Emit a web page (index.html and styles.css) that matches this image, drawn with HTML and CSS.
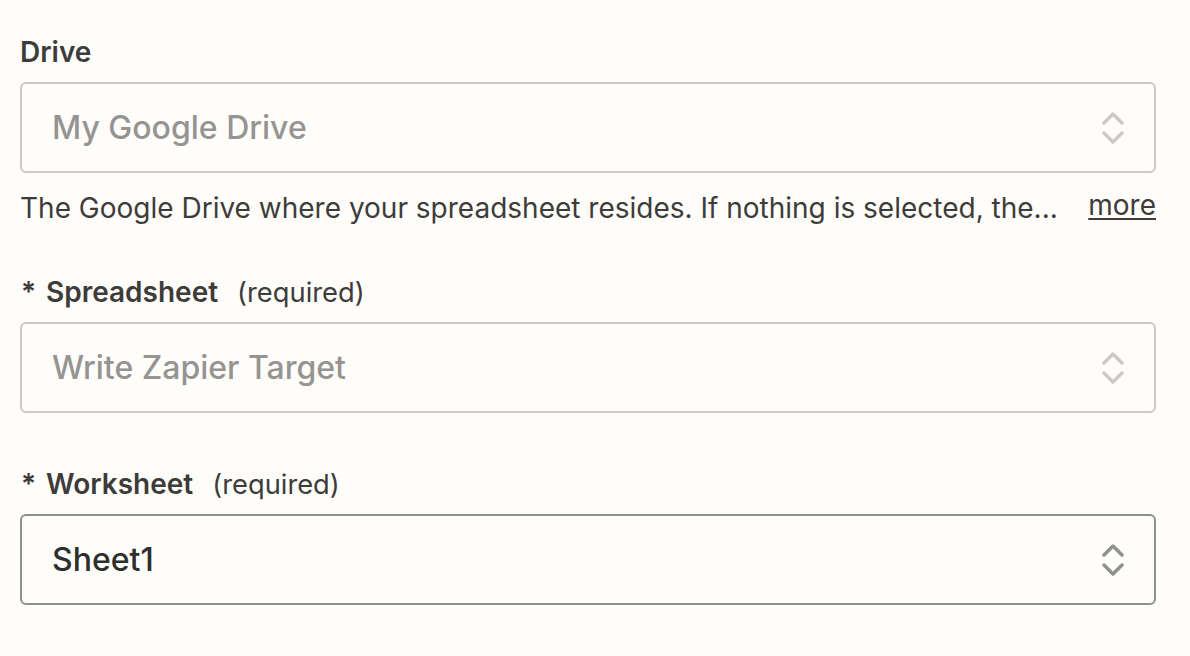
FILE: index.html
```html
<!DOCTYPE html>
<html>
<head>
<meta charset="utf-8">
<link rel="stylesheet" href="styles.css">
</head>
<body>
<div class="form">
  <div class="field field-drive">
    <div class="label"><span class="name">Drive</span></div>
    <div class="select is-empty">
      <span class="value">My Google Drive</span>
      <svg class="chev" viewBox="0 0 22 34" width="22" height="34"><polyline points="2,12 11,3 20,12"/><polyline points="2,22 11,31 20,22"/></svg>
    </div>
    <div class="help">
      <span class="help-text">The Google Drive where your spreadsheet resides. If nothing is selected, the...</span>
      <a class="more" href="#">more</a>
    </div>
  </div>
  <div class="field field-sheet">
    <div class="label"><span class="star">*</span><span class="name">Spreadsheet</span><span class="req">(required)</span></div>
    <div class="select is-empty">
      <span class="value">Write Zapier Target</span>
      <svg class="chev" viewBox="0 0 22 34" width="22" height="34"><polyline points="2,12 11,3 20,12"/><polyline points="2,22 11,31 20,22"/></svg>
    </div>
  </div>
  <div class="field field-work">
    <div class="label"><span class="star">*</span><span class="name">Worksheet</span><span class="req">(required)</span></div>
    <div class="select is-set">
      <span class="value">Sheet1</span>
      <svg class="chev" viewBox="0 0 22 34" width="22" height="34"><polyline points="2,12 11,3 20,12"/><polyline points="2,22 11,31 20,22"/></svg>
    </div>
  </div>
</div>
</body>
</html>
```

FILE: styles.css
```css
html, body {
  margin: 0;
  padding: 0;
  background: #fffdf9;
}
body {
  font-family: Inter, "Noto Sans", "Liberation Sans", sans-serif;
  color: #3d3c3b;
}
.form {
  width: 1136px;
  padding: 32px 0 0 20px;
  display: flex;
  flex-direction: column;
}
.field-sheet { margin-top: 44px; }
.field-work { margin-top: 51px; }
.label {
  height: 40px;
  line-height: 40px;
  font-size: 28px;
  display: flex;
  align-items: baseline;
  margin-bottom: 10px;
}
.label .name { font-weight: 600; color: #3d3c3b; }
.label .star { font-weight: 600; width: 25px; padding-left: 1px; }
.label .req { font-weight: 400; font-size: 27.3px; margin-left: 19px; color: #3d3c3b; }
.select {
  box-sizing: border-box;
  height: 91px;
  border: 2px solid #cbcac8;
  border-radius: 6px;
  display: flex;
  align-items: center;
  justify-content: space-between;
  padding: 0 30px 0 30px;
  font-size: 32px;
  font-weight: 500;
}
.select .value { margin-top: 0; }
.select.is-empty .value { color: #959492; }
.select.is-set { border-color: #90908e; }
.select.is-set .value { color: #2d2e2e; }
.chev { fill: none; stroke-width: 3.5; stroke-linecap: round; stroke-linejoin: round; }
.is-empty .chev { stroke: #cbcac8; }
.is-set .chev { stroke: #90908e; }
.help {
  margin-top: 15px;
  height: 40px;
  line-height: 40px;
  font-size: 28px;
  display: flex;
  justify-content: space-between;
  align-items: baseline;
  color: #3d3c3b;
}
.more {
  color: #3d3c3b;
  position: relative;
  top: -3px;
  text-decoration: underline;
  text-underline-offset: 3px;
  text-decoration-thickness: 2px;
}
```
